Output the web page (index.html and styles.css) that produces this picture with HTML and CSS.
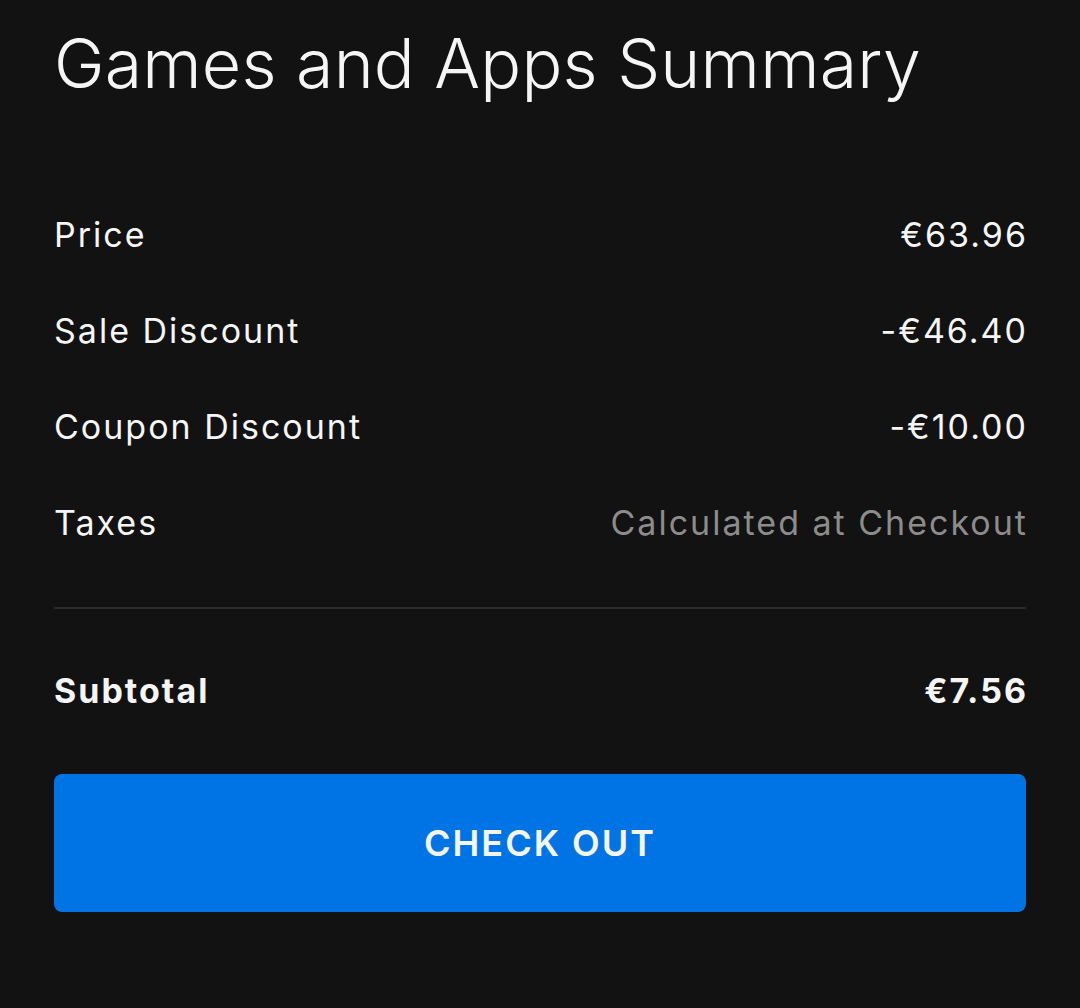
FILE: index.html
```html
<!DOCTYPE html>
<html lang="en">
<head>
  <meta charset="UTF-8">
  <title>Games and Apps Summary</title>
  <link rel="stylesheet" href="styles.css">
</head>
<body>

  <div class="summary">
    <h1>Games and Apps Summary</h1>

    <div class="lines">
      <div class="line">
        <span>Price</span>
        <span class="value">€63.96</span>
      </div>
      <div class="line">
        <span>Sale Discount</span>
        <span class="value">-€46.40</span>
      </div>
      <div class="line">
        <span>Coupon Discount</span>
        <span class="value">-€10.00</span>
      </div>
      <div class="line">
        <span>Taxes</span>
        <span class="value muted">Calculated at Checkout</span>
      </div>
    </div>

    <div class="line total">
      <span>Subtotal</span>
      <span class="value">€7.56</span>
    </div>

    <button class="checkout">Check Out</button>
  </div>

</body>
</html>
```

FILE: styles.css
```css
body {
  margin: 0;
  font-family: 'Inter', sans-serif;
  background: #121212;
  color: #f5f5f5;
}

.summary {
  padding: 0 54px;
}

h1 {
  margin: 23px 0 0;
  font-size: 68px;
  line-height: 80px;
  font-weight: 300;
  letter-spacing: 0.2px;
}

.lines {
  margin-top: 84px;
  padding-bottom: 36px;
  border-bottom: 2px solid #2b2b2b;
}

.line {
  display: flex;
  justify-content: space-between;
  padding: 28px 0;
  font-size: 34px;
  line-height: 40px;
  letter-spacing: 2px;
}

/* trailing letter-spacing pushes the numbers off the edge */
.value {
  margin-right: -2px;
}

.muted {
  color: #8c8c8c;
}

.total {
  padding: 62px 0 0;
  font-weight: 700;
}

.checkout {
  display: block;
  width: 100%;
  height: 138px;
  margin-top: 63px;
  border: none;
  border-radius: 8px;
  background: #0074e4;
  color: #f5f5f5;
  font-family: 'Inter', sans-serif;
  font-size: 36px;
  font-weight: 600;
  letter-spacing: 2px;
  text-transform: uppercase;
  cursor: pointer;
}
```
